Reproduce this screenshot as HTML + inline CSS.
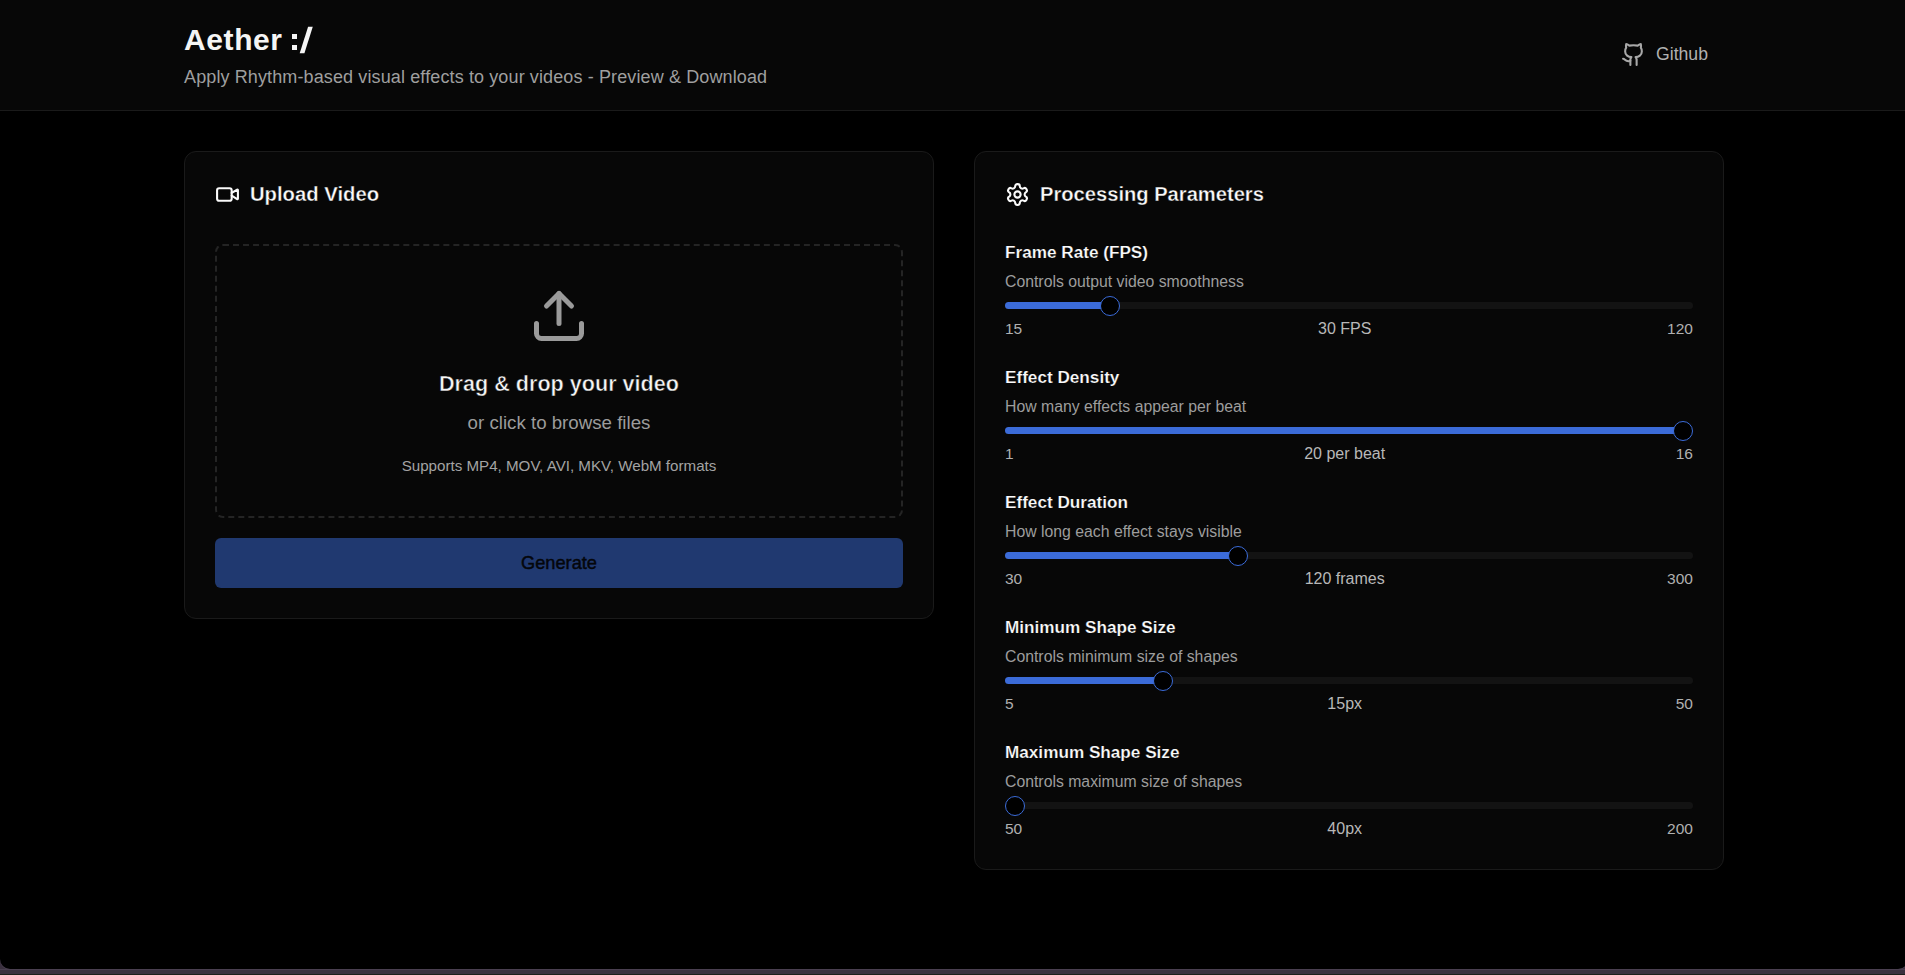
<!DOCTYPE html>
<html><head><meta charset="utf-8"><title>Aether</title>
<style>
html,body{margin:0;padding:0;}
body{width:1905px;height:975px;overflow:hidden;background:#000;position:relative;font-family:"Liberation Sans",sans-serif;}
.t{position:absolute;line-height:1;white-space:nowrap;}
.ic{position:absolute;display:block;}
.header{position:absolute;left:0;top:0;width:1905px;height:110px;background:#070707;border-bottom:1px solid #1a1a1a;}
.card{position:absolute;box-sizing:border-box;border:1px solid #1a1a1a;border-radius:12px;background:#070707;}
.drop{position:absolute;left:215px;top:244px;width:688px;height:274px;box-sizing:border-box;border:2px dashed #242424;border-radius:8px;}
.btn{position:absolute;left:215px;top:538px;width:688px;height:50px;border-radius:6px;background:#203970;color:#04060b;font-size:18.2px;font-weight:400;-webkit-text-stroke:0.45px #04060b;line-height:50px;text-align:center;}
.track{position:absolute;left:1005px;width:688px;height:7px;border-radius:3.5px;background:#131313;}
.fill{position:absolute;left:1005px;height:7px;border-radius:3.5px 0 0 3.5px;background:#3b6bd8;}
.thumb{position:absolute;width:20px;height:20px;box-sizing:border-box;border:1px solid #3b6bd8;border-radius:50%;background:#000;}
.vals{position:absolute;left:1005px;width:688px;display:flex;justify-content:space-between;align-items:baseline;font-size:15.5px;line-height:1;color:#b0b0b0;white-space:nowrap;}
.vals span:nth-child(2){color:#b8b8b8;font-size:16px;}
.frame{position:absolute;left:0;top:955px;width:1905px;height:20px;background:#3a303e;}
.frame .hl{position:absolute;left:0;top:14px;width:1905px;height:1px;background:#4a3f50;}
.frame .dk{position:absolute;left:0;top:19px;width:1905px;height:1px;background:#1b1f1a;}
.frame .pg{position:absolute;left:0;top:-10px;width:1908px;height:24px;background:#000;border-radius:0 0 10px 10px;box-shadow:0 1px 0 0 #4a3f50;}
</style></head><body>
<div class="header"></div>
<div class="card" style="left:184px;top:151px;width:750px;height:468px;"></div>
<div class="card" style="left:974px;top:151px;width:750px;height:719px;"></div>
<div class="drop"></div>
<div class="btn">Generate</div>
<svg class="ic" style="left:1621px;top:42px" width="25" height="25" viewBox="0 0 24 24" fill="none" stroke="#a8a8a8" stroke-width="2" stroke-linecap="round" stroke-linejoin="round"><path d="M15 22v-4a4.8 4.8 0 0 0-1-3.5c3 0 6-2 6-5.5.08-1.25-.27-2.48-1-3.5.28-1.15.28-2.35 0-3.5 0 0-1 0-3 1.5-2.64-.5-5.36-.5-8 0C6 2 5 2 5 2c-.3 1.15-.3 2.35 0 3.5A5.403 5.403 0 0 0 4 9c0 3.5 3 5.5 6 5.5-.39.49-.68 1.05-.85 1.65-.17.6-.22 1.23-.15 1.85v4"/><path d="M9 18c-4.51 2-5-2-7-2"/></svg>
<svg class="ic" style="left:215px;top:182px" width="25" height="25" viewBox="0 0 24 24" fill="none" stroke="#fafafa" stroke-width="2" stroke-linecap="round" stroke-linejoin="round"><path d="m16 13 5.223 3.482a.5.5 0 0 0 .777-.416V7.87a.5.5 0 0 0-.752-.432L16 10.5"/><rect x="2" y="6" width="14" height="12" rx="2"/></svg>
<svg class="ic" style="left:1005px;top:182px" width="25" height="25" viewBox="0 0 24 24" fill="none" stroke="#fafafa" stroke-width="2" stroke-linecap="round" stroke-linejoin="round"><path d="M12.22 2h-.44a2 2 0 0 0-2 2v.18a2 2 0 0 1-1 1.73l-.43.25a2 2 0 0 1-2 0l-.15-.08a2 2 0 0 0-2.73.73l-.22.38a2 2 0 0 0 .73 2.73l.15.1a2 2 0 0 1 1 1.72v.51a2 2 0 0 1-1 1.74l-.15.09a2 2 0 0 0-.73 2.73l.22.38a2 2 0 0 0 2.73.73l.15-.08a2 2 0 0 1 2 0l.43.25a2 2 0 0 1 1 1.73V20a2 2 0 0 0 2 2h.44a2 2 0 0 0 2-2v-.18a2 2 0 0 1 1-1.73l.43-.25a2 2 0 0 1 2 0l.15.08a2 2 0 0 0 2.73-.73l.22-.39a2 2 0 0 0-.73-2.73l-.15-.08a2 2 0 0 1-1-1.74v-.5a2 2 0 0 1 1-1.74l.15-.09a2 2 0 0 0 .73-2.73l-.22-.38a2 2 0 0 0-2.73-.73l-.15.08a2 2 0 0 1-2 0l-.43-.25a2 2 0 0 1-1-1.73V4a2 2 0 0 0-2-2z"/><circle cx="12" cy="12" r="3"/></svg>
<svg class="ic" style="left:529px;top:286px" width="60" height="60" viewBox="0 0 24 24" fill="none" stroke="#9a9a9a" stroke-width="2" stroke-linecap="round" stroke-linejoin="round"><path d="M12 3v12"/><path d="m17 8-5-5-5 5"/><path d="M21 15v4a2 2 0 0 1-2 2H5a2 2 0 0 1-2-2v-4"/></svg>
<div class="t" style="left:184px;top:24.60px;font-size:30px;color:#f5f5f5;font-weight:700;letter-spacing:0.6px;">Aether</div>
<div style="position:absolute;left:292px;top:34.2px;width:5px;height:4.7px;background:#f5f5f5"></div>
<div style="position:absolute;left:292px;top:45.3px;width:5px;height:4.7px;background:#f5f5f5"></div>
<svg style="position:absolute;left:0;top:0" width="400" height="100"><polygon points="299.7,53.2 304.4,53.2 312.8,26.85 308.1,26.85" fill="#f5f5f5"/></svg>
<div class="t" style="left:184px;top:67.76px;font-size:18px;color:#9f9f9f;letter-spacing:0.12px;">Apply Rhythm-based visual effects to your videos - Preview &amp; Download</div>
<div class="t" style="left:1656px;top:46.06px;font-size:17.65px;color:#b0b0b0;">Github</div>
<div class="t" style="left:250px;top:183.86px;font-size:20.25px;color:#fafafa;font-weight:700;-webkit-text-stroke:0.35px #070707;">Upload Video</div>
<div class="t" style="left:215px;top:372.72px;font-size:21.6px;color:#f5f5f5;font-weight:700;width:688px;text-align:center;-webkit-text-stroke:0.5px #070707;">Drag &amp; drop your video</div>
<div class="t" style="left:215px;top:414.17px;font-size:18.7px;color:#9c9c9c;width:688px;text-align:center;">or click to browse files</div>
<div class="t" style="left:215px;top:458.18px;font-size:15.15px;color:#a3a3a3;width:688px;text-align:center;">Supports MP4, MOV, AVI, MKV, WebM formats</div>
<div class="t" style="left:1040px;top:183.94px;font-size:20.15px;color:#fafafa;font-weight:700;-webkit-text-stroke:0.35px #070707;">Processing Parameters</div>
<div class="t" style="left:1005px;top:244.47px;font-size:17.16px;color:#fafafa;font-weight:700;-webkit-text-stroke:0.2px #070707;">Frame Rate (FPS)</div>
<div class="t" style="left:1005px;top:274.13px;font-size:15.8px;color:#9d9d9d;">Controls output video smoothness</div>
<div class="track" style="top:302px"></div>
<div class="fill" style="top:302px;width:105.4px"></div>
<div class="thumb" style="left:1100.4px;top:296px"></div>
<div class="vals" style="top:320.88px"><span>15</span><span>30 FPS</span><span>120</span></div>
<div class="t" style="left:1005px;top:369.47px;font-size:17.16px;color:#fafafa;font-weight:700;-webkit-text-stroke:0.2px #070707;">Effect Density</div>
<div class="t" style="left:1005px;top:399.13px;font-size:15.8px;color:#9d9d9d;">How many effects appear per beat</div>
<div class="track" style="top:427px"></div>
<div class="fill" style="top:427px;width:678.0px"></div>
<div class="thumb" style="left:1673.0px;top:421px"></div>
<div class="vals" style="top:445.88px"><span>1</span><span>20 per beat</span><span>16</span></div>
<div class="t" style="left:1005px;top:494.47px;font-size:17.16px;color:#fafafa;font-weight:700;-webkit-text-stroke:0.2px #070707;">Effect Duration</div>
<div class="t" style="left:1005px;top:524.13px;font-size:15.8px;color:#9d9d9d;">How long each effect stays visible</div>
<div class="track" style="top:552px"></div>
<div class="fill" style="top:552px;width:232.7px"></div>
<div class="thumb" style="left:1227.7px;top:546px"></div>
<div class="vals" style="top:570.88px"><span>30</span><span>120 frames</span><span>300</span></div>
<div class="t" style="left:1005px;top:619.47px;font-size:17.16px;color:#fafafa;font-weight:700;-webkit-text-stroke:0.2px #070707;">Minimum Shape Size</div>
<div class="t" style="left:1005px;top:649.13px;font-size:15.8px;color:#9d9d9d;">Controls minimum size of shapes</div>
<div class="track" style="top:677px"></div>
<div class="fill" style="top:677px;width:158.4px"></div>
<div class="thumb" style="left:1153.4px;top:671px"></div>
<div class="vals" style="top:695.88px"><span>5</span><span>15px</span><span>50</span></div>
<div class="t" style="left:1005px;top:744.47px;font-size:17.16px;color:#fafafa;font-weight:700;-webkit-text-stroke:0.2px #070707;">Maximum Shape Size</div>
<div class="t" style="left:1005px;top:774.13px;font-size:15.8px;color:#9d9d9d;">Controls maximum size of shapes</div>
<div class="track" style="top:802px"></div>
<div class="thumb" style="left:1005.0px;top:796px"></div>
<div class="vals" style="top:820.88px"><span>50</span><span>40px</span><span>200</span></div>

<div class="frame"><div class="hl"></div><div class="pg"></div><div class="dk"></div></div>
</body></html>
